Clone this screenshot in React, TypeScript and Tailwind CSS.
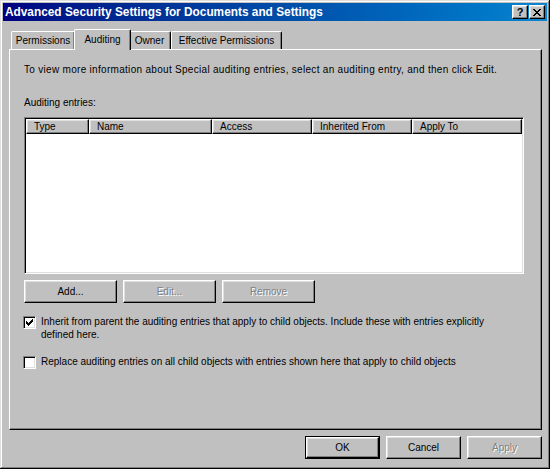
import React from 'react';

const raised =
  'border border-t-white border-l-white border-b-black border-r-black shadow-[inset_-1px_-1px_#808080,inset_1px_1px_#dfdfdf]';
const sunken =
  'border border-t-[#808080] border-l-[#808080] border-b-white border-r-white shadow-[inset_1px_1px_#000,inset_-1px_-1px_#dfdfdf]';

function Button({ label, disabled, isDefault }: { label: string; disabled?: boolean; isDefault?: boolean }) {
  const inner = (
    <div className={`flex h-full w-full items-center justify-center bg-[#c0c0c0] ${raised}`}>
      <span className={disabled ? 'text-[#808080] [text-shadow:1px_1px_0_#fff]' : 'text-black'}>{label}</span>
    </div>
  );
  if (isDefault) {
    return <div className="h-[23px] w-[75px] border border-black">{inner}</div>;
  }
  return <div className="h-[23px] w-[75px]">{inner}</div>;
}

function ButtonWide({ label, disabled }: { label: string; disabled?: boolean }) {
  return (
    <div className={`flex h-[23px] w-[93px] items-center justify-center bg-[#c0c0c0] ${raised}`}>
      <span className={disabled ? 'text-[#808080] [text-shadow:1px_1px_0_#fff]' : 'text-black'}>{label}</span>
    </div>
  );
}

function CloseGlyph() {
  const px = [
    [0, 0], [1, 0], [6, 0], [7, 0],
    [1, 1], [2, 1], [5, 1], [6, 1],
    [2, 2], [3, 2], [4, 2], [5, 2],
    [3, 3], [4, 3],
    [2, 4], [3, 4], [4, 4], [5, 4],
    [1, 5], [2, 5], [5, 5], [6, 5],
    [0, 6], [1, 6], [6, 6], [7, 6],
  ];
  return (
    <svg width="8" height="7" viewBox="0 0 8 7" shapeRendering="crispEdges">
      {px.map(([x, y]) => (
        <rect key={`${x}-${y}`} x={x} y={y} width="1" height="1" fill="#000" />
      ))}
    </svg>
  );
}

function CheckGlyph() {
  const px = [
    [6, 0],
    [5, 1], [6, 1],
    [0, 2], [4, 2], [5, 2], [6, 2],
    [0, 3], [1, 3], [3, 3], [4, 3], [5, 3],
    [0, 4], [1, 4], [2, 4], [3, 4], [4, 4],
    [1, 5], [2, 5], [3, 5],
    [2, 6],
  ];
  return (
    <svg width="7" height="7" viewBox="0 0 7 7" shapeRendering="crispEdges">
      {px.map(([x, y]) => (
        <rect key={`${x}-${y}`} x={x} y={y} width="1" height="1" fill="#000" />
      ))}
    </svg>
  );
}

function Checkbox({ checked }: { checked?: boolean }) {
  return (
    <div className={`flex h-[13px] w-[13px] shrink-0 items-center justify-center bg-white ${sunken}`}>
      {checked && <CheckGlyph />}
    </div>
  );
}

const columns = [
  { name: 'Type', w: 'w-[63px]' },
  { name: 'Name', w: 'w-[123px]' },
  { name: 'Access', w: 'w-[100px]' },
  { name: 'Inherited From', w: 'w-[100px]' },
  { name: 'Apply To', w: 'w-[110px]' },
];

export default function App() {
  return (
    <div className="h-[469px] w-[550px] bg-[#c0c0c0] font-['Liberation_Sans',Arial,sans-serif] text-[10px] leading-[13px] text-black">
      <div className="flex h-full w-full flex-col p-[3px] shadow-[inset_-1px_-1px_#000,inset_1px_1px_#dfdfdf,inset_-2px_-2px_#808080,inset_2px_2px_#fff]">
        {/* Title bar */}
        <div className="flex h-[18px] shrink-0 items-center justify-between bg-gradient-to-r from-[#000080] to-[#1084d0] pl-[2px] pr-[2px]">
          <span className="text-[11.85px] font-bold text-white">Advanced Security Settings for Documents and Settings</span>
          <div className="flex gap-[1px]">
            <div className={`flex h-[14px] w-[16px] items-center justify-center bg-[#c0c0c0] ${raised}`}>
              <span className="text-[11px] font-bold leading-none">?</span>
            </div>
            <div className={`flex h-[14px] w-[16px] items-center justify-center bg-[#c0c0c0] ${raised}`}>
              <CloseGlyph />
            </div>
          </div>
        </div>

        {/* Tabs */}
        <div className="ml-[6px] mt-[8px] flex h-[20px] items-end">
          <div className="ml-[2px] flex h-[18px] w-[64px] items-center justify-center rounded-tl-[2px] border-l border-t border-r border-l-white border-t-white border-r-black shadow-[inset_-1px_0_#808080]">
            Permissions
          </div>
          <div className="relative z-10 -mb-[1px] -ml-[1px] -mr-[2px] flex h-[21px] w-[57px] items-start justify-center rounded-t-[2px] border-l border-t border-r border-l-white border-t-white border-r-black bg-[#c0c0c0] pt-[3px] shadow-[inset_-1px_0_#808080]">
            Auditing
          </div>
          <div className="flex h-[18px] w-[42px] items-center justify-center rounded-tr-[2px] border-t border-r border-t-white border-r-black shadow-[inset_-1px_0_#808080]">
            Owner
          </div>
          <div className="flex h-[18px] w-[111px] items-center justify-center rounded-t-[2px] border-l border-t border-r border-l-white border-t-white border-r-black shadow-[inset_-1px_0_#808080]">
            Effective Permissions
          </div>
        </div>

        {/* Panel */}
        <div className="ml-[6px] flex h-[381px] w-[533px] flex-col border border-t-white border-l-white border-b-black border-r-black pl-[14px] pt-[13px] shadow-[inset_-1px_-1px_#808080]">
          <p className="tracking-[0.3px]">
            To view more information about Special auditing entries, select an auditing entry, and then click Edit.
          </p>
          <p className="mt-[20px]">Auditing entries:</p>

          <div className={`mt-[8px] h-[157px] w-[500px] bg-white p-[1px] ${sunken}`}>
            <div className="flex h-[15px]">
              {columns.map((c) => (
                <div
                  key={c.name}
                  className={`flex h-full shrink-0 items-center bg-[#c0c0c0] pl-[7px] ${c.w} ${raised}`}
                >
                  {c.name}
                </div>
              ))}
            </div>
          </div>

          <div className="mt-[6px] flex gap-[6px]">
            <ButtonWide label="Add..." />
            <ButtonWide label="Edit..." disabled />
            <ButtonWide label="Remove" disabled />
          </div>

          <div className="mt-[12px] -ml-[1px] flex items-start gap-[5px]">
            <div className="pt-[1px]">
              <Checkbox checked />
            </div>
            <p className="w-[460px]">
              Inherit from parent the auditing entries that apply to child objects. Include these with entries explicitly defined here.
            </p>
          </div>

          <div className="mt-[14px] -ml-[1px] flex items-start gap-[5px]">
            <div className="pt-[1px]">
              <Checkbox />
            </div>
            <p>Replace auditing entries on all child objects with entries shown here that apply to child objects</p>
          </div>
        </div>

        {/* Dialog buttons */}
        <div className="mt-[6px] flex justify-end gap-[6px] pr-[5px]">
          <Button label="OK" isDefault />
          <Button label="Cancel" />
          <Button label="Apply" disabled />
        </div>
      </div>
    </div>
  );
}
